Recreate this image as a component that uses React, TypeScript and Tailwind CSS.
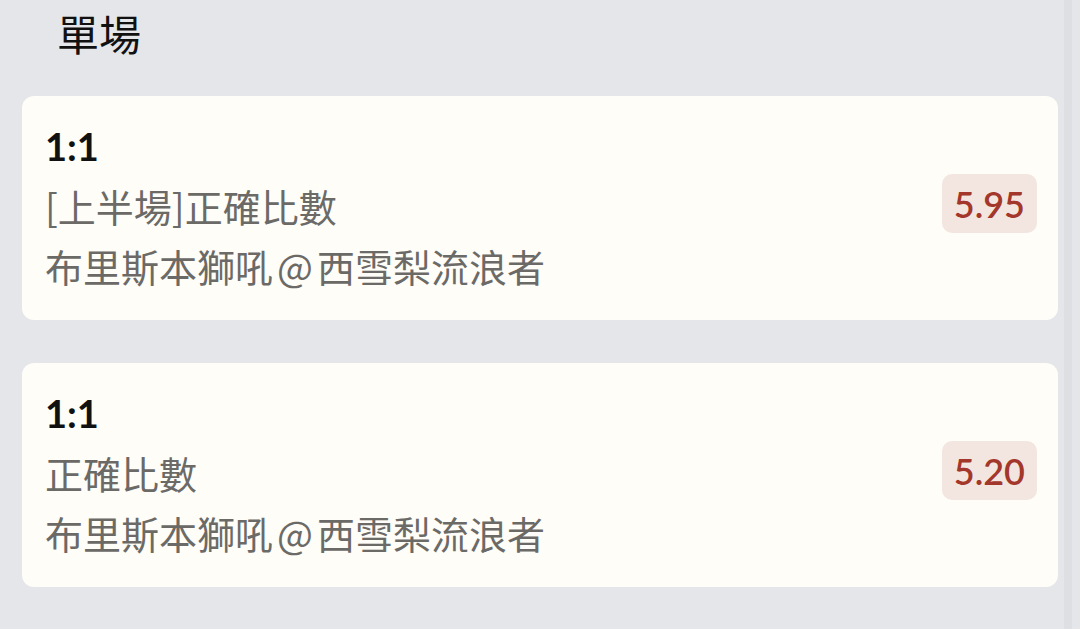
const bets = [
  { score: '1:1', market: '[上半場]正確比數', home: '布里斯本獅吼', away: '西雪梨流浪者', odds: '5.95' },
  { score: '1:1', market: '正確比數', home: '布里斯本獅吼', away: '西雪梨流浪者', odds: '5.20' },
]

const latin = { fontFamily: 'Lato, "Noto Sans CJK TC", sans-serif' }
const cjk = { fontFamily: '"Noto Sans CJK TC", sans-serif' }

export default function App() {
  return (
    <div className="flex h-[629px] w-[1080px] overflow-hidden bg-[#e5e6ea]" style={latin}>
      <div className="flex w-[1064px] flex-col">
        <h1 className="pl-[57px] pt-[8px] text-[42px] leading-[50px] font-normal text-[#111]" style={cjk}>
          單場
        </h1>
        <div className="mt-[38px] flex flex-col gap-[43px] pl-[22px] pr-[6px]">
          {bets.map((b, i) => (
            <div
              key={i}
              className="flex h-[224px] items-center justify-between rounded-[12px] bg-[#fffdf7] pl-[23px] pr-[21px]"
            >
              <div className="flex flex-col text-[38px] leading-[60px]">
                <span className="-mt-[4px] font-bold text-[#111]">{b.score}</span>
                <span className="text-[#6b6a67]" style={cjk}>{b.market}</span>
                <span className="text-[#6b6a67]" style={cjk}>
                  {b.home}
                  <span className="mx-[4px]">@</span>
                  {b.away}
                </span>
              </div>
              <div className="mb-[9px] flex h-[59px] items-center rounded-[10px] bg-[#f3e6e0] px-[12px] text-[36px] font-semibold text-[#a3372b]">
                {b.odds}
              </div>
            </div>
          ))}
        </div>
      </div>
      <div className="w-[8px] bg-[#dedfe3]" />
    </div>
  )
}
